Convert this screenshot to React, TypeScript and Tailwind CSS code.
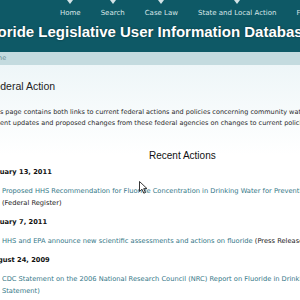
const navItems = ['Home', 'Search', 'Case Law', 'State and Local Action', 'Federal Action'];

const actions = [
  {
    date: 'January 13, 2011',
    lines: [
      [{ text: 'Proposed HHS Recommendation for Fluoride Concentration in Drinking Water for Prevention of Dental Caries', link: true }],
      [{ text: '(Federal Register)', link: false }],
    ],
  },
  {
    date: 'January 7, 2011',
    lines: [
      [
        { text: 'HHS and EPA announce new scientific assessments and actions on fluoride', link: true },
        { text: ' (Press Release)', link: false },
      ],
    ],
  },
  {
    date: 'August 24, 2009',
    lines: [
      [{ text: 'CDC Statement on the 2006 National Research Council (NRC) Report on Fluoride in Drinking Water (CDC', link: true }],
      [{ text: 'Statement)', link: true }],
    ],
  },
];

const Cursor = () => (
  <svg
    className="absolute left-[139px] top-[181px]"
    width="9"
    height="13"
    viewBox="0 0 9 13"
  >
    <path
      d="M0.5 0.5 L0.5 10.5 L3 8.2 L4.8 12.2 L6.4 11.5 L4.7 7.6 L8 7.6 Z"
      fill="#fff"
      stroke="#222"
      strokeWidth="0.9"
      strokeLinejoin="round"
    />
  </svg>
);

const App = () => {
  return (
    <div className="relative w-[300px] h-[300px] overflow-hidden bg-white font-['DejaVu_Sans',sans-serif]">
      <header className="h-[52px] bg-[#0e5966]">
        <nav className="flex pl-[50px] whitespace-nowrap">
          {navItems.map((item) => (
            <div key={item} className="flex flex-col items-center px-[10px]">
              <span className="w-0 h-0 border-l-[3px] border-r-[3px] border-t-[4px] border-l-transparent border-r-transparent border-t-[#d3e3e6]" />
              <span className="mt-[5px] text-[7px] leading-[8px] text-[#d9e7e9]">{item}</span>
            </div>
          ))}
        </nav>
        <h1 className="mt-[6px] -ml-[25px] whitespace-nowrap text-[15px] leading-[17px] font-bold text-white font-['Liberation_Sans',sans-serif] [text-shadow:0_0_2px_rgba(0,0,0,0.5)]">
          Fluoride Legislative User Information Database
        </h1>
      </header>

      <div className="h-[13px] bg-[#c4dbdf] flex items-center">
        <span className="-ml-[13px] text-[6.5px] text-[#6a8c92]">Home</span>
      </div>

      <main className="bg-gradient-to-b from-[#eef6f8] to-white to-[90px] h-[235px] whitespace-nowrap">
        <h2 className="pt-[15px] -ml-[12px] text-[10.5px] leading-[12px] text-[#222] font-['Liberation_Sans',sans-serif]">
          Federal Action
        </h2>
        <div className="mt-[15px] -ml-[10px] text-[6.5px] leading-[11px] text-[#2a2a2a]">
          <p>This page contains both links to current federal actions and policies concerning community water fluoridation</p>
          <p>recent updates and proposed changes from these federal agencies on changes to current policies</p>
        </div>
        <h3 className="mt-[21px] pl-[149px] text-[10px] leading-[12px] text-[#111] font-['Liberation_Sans',sans-serif]">
          Recent Actions
        </h3>
        <div className="mt-[5px]">
          {actions.map((action, i) => (
            <div key={action.date} className={i === 0 ? '' : 'mt-[8px]'}>
              <div className="-ml-[12px] text-[6.7px] leading-[10px] font-bold text-[#111]">
                {action.date}
              </div>
              <div className="mt-[8px] pl-[2px] text-[6.7px] leading-[12px]">
                {action.lines.map((line, j) => (
                  <div key={j}>
                    {line.map((part) => (
                      <span
                        key={part.text}
                        className={part.link ? 'text-[#347787]' : 'text-[#222]'}
                      >
                        {part.text}
                      </span>
                    ))}
                  </div>
                ))}
              </div>
            </div>
          ))}
        </div>
      </main>

      <Cursor />
    </div>
  );
};

export default App;
